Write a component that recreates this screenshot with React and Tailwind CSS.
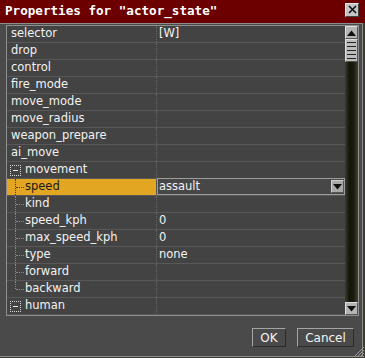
import React from 'react'

const rows = [
  { name: 'selector', value: '[W]' },
  { name: 'drop' },
  { name: 'control' },
  { name: 'fire_mode' },
  { name: 'move_mode' },
  { name: 'move_radius' },
  { name: 'weapon_prepare' },
  { name: 'ai_move' },
  { name: 'movement', group: true },
  { name: 'speed', child: true, selected: true, value: 'assault' },
  { name: 'kind', child: true },
  { name: 'speed_kph', child: true, value: '0' },
  { name: 'max_speed_kph', child: true, value: '0' },
  { name: 'type', child: true, value: 'none' },
  { name: 'forward', child: true },
  { name: 'backward', child: true, last: true },
  { name: 'human', group: true },
]

function Toggle() {
  return (
    <div className="relative ml-[3px] mr-[4px] h-[11px] w-[11px] shrink-0 border border-dotted border-[#d8d8d8]">
      <div className="absolute left-[2px] top-[4px] h-px w-[5px] bg-[#e8e8e8]" />
    </div>
  )
}

function TreeLines({ last, dark }) {
  const c = dark ? 'border-[#5a3c00]' : 'border-[#8a8a8a]'
  return (
    <div className="relative h-full w-[18px] shrink-0">
      <div className={`absolute left-[8px] top-0 w-0 border-l border-dotted ${c} ${last ? 'h-[8px]' : 'h-full'}`} />
      <div className={`absolute left-[9px] top-[8px] h-0 w-[8px] border-t border-dotted ${c}`} />
    </div>
  )
}

function PropertyRow({ row }) {
  return (
    <div className="flex h-[17px] border-b border-[#585858]">
      <div
        className={`flex w-[149px] shrink-0 items-center ${
          row.selected ? 'bg-[#e2a622] text-[#1a1a1a]' : 'text-[#f2f2f2]'
        } ${row.group || row.child ? '' : 'pl-[4px]'}`}
      >
        {row.group && <Toggle />}
        {row.child && <TreeLines last={row.last} dark={row.selected} />}
        <span className="leading-none">{row.name}</span>
      </div>
      <div className="w-px shrink-0 border-l border-dotted border-[#666]" />
      {row.selected ? (
        <div className="-mt-[1px] flex h-[17px] flex-1 items-center border border-[#9c9c9c] bg-[#474747] pl-[1px]">
          <span className="flex-1 leading-none text-[#f2f2f2]">{row.value}</span>
          <div className="flex h-[13px] w-[13px] items-center justify-center border border-[#d0d0d0] border-b-[#555] border-r-[#555] bg-[#a8a8a8]">
            <svg width="9" height="6" viewBox="0 0 9 6">
              <path d="M0 0 H9 L4.5 5.5 Z" fill="#111" />
            </svg>
          </div>
        </div>
      ) : (
        <div className="flex flex-1 items-center pl-[2px] text-[#f2f2f2]">
          <span className="leading-none">{row.value}</span>
        </div>
      )}
    </div>
  )
}

function ScrollButton({ down }) {
  return (
    <div className="flex h-[13px] w-[13px] items-center justify-center border border-[#e0e0e0] border-b-[#555] border-r-[#555] bg-[#b4b4b4]">
      <svg width="9" height="6" viewBox="0 0 9 6">
        <path d={down ? 'M0 0 H9 L4.5 5.5 Z' : 'M0 6 H9 L4.5 0.5 Z'} fill="#111" />
      </svg>
    </div>
  )
}

function Scrollbar() {
  return (
    <div className="flex w-[13px] shrink-0 flex-col bg-[linear-gradient(to_right,#3c3c2a,#141409_35%,#1a1a0e_65%,#42422e)]">
      <ScrollButton />
      <div className="flex h-[23px] flex-col justify-center gap-[3px] border border-[#dcdcdc] border-b-[#555] border-r-[#555] bg-[#bcbcbc] px-[1px]">
        {[0, 1, 2, 3, 4].map((i) => (
          <div key={i} className="h-px bg-[#222]" />
        ))}
      </div>
      <div className="flex-1" />
      <ScrollButton down />
    </div>
  )
}

export default function App() {
  return (
    <div
      className="relative h-[358px] w-[365px] overflow-hidden bg-[#3d3c31] text-[11.5px]"
      style={{ fontFamily: '"DejaVu Sans", Verdana, sans-serif' }}
    >
      <div className="flex h-[23px] items-center justify-between bg-[#6c0000] pl-[5px] pr-[6px]">
        <span
          className="text-[12.6px] font-bold leading-none text-white"
          style={{ fontFamily: '"DejaVu Sans Mono", monospace' }}
        >
          Properties for "actor_state"
        </span>
        <div className="mb-[4px] flex h-[14px] w-[14px] items-center justify-center border border-[#e6e6e6] border-b-[#444] border-r-[#444] bg-[#c4c4c4]">
          <svg width="9" height="9" viewBox="0 0 9 9">
            <path d="M1 1 L8 8 M8 1 L1 8" stroke="#111" strokeWidth="1.6" />
          </svg>
        </div>
      </div>
      <div className="flex h-[334px] w-[363px] flex-col border-b border-r border-t border-[#8c8c8c] bg-[#4a4a4a] pl-[6px] pr-[3px] pt-[1px]">
        <div className="flex border border-[#8e8e8e] bg-[#434343]">
          <div className="flex-1">
            {rows.map((row) => (
              <PropertyRow key={row.name} row={row} />
            ))}
          </div>
          <Scrollbar />
        </div>
        <div className="mr-[5px] mt-[12px] flex justify-end gap-[11px]">
          <button className="h-[19px] w-[34px] border border-[#a4a4a4] border-b-[#2c2c2c] border-r-[#2c2c2c] text-[12px] leading-none text-[#f4f4f4]">
            OK
          </button>
          <button className="h-[19px] w-[57px] border border-[#a4a4a4] border-b-[#2c2c2c] border-r-[#2c2c2c] text-[12px] leading-none text-[#f4f4f4]">
            Cancel
          </button>
        </div>
      </div>
      <svg className="absolute bottom-0 right-0" width="13" height="13" viewBox="0 0 13 13">
        <path d="M12 2 L2 12 M12 5 L5 12 M12 8 L8 12 M12 11 L11 12" stroke="#9a9a9a" strokeWidth="1" />
      </svg>
    </div>
  )
}
